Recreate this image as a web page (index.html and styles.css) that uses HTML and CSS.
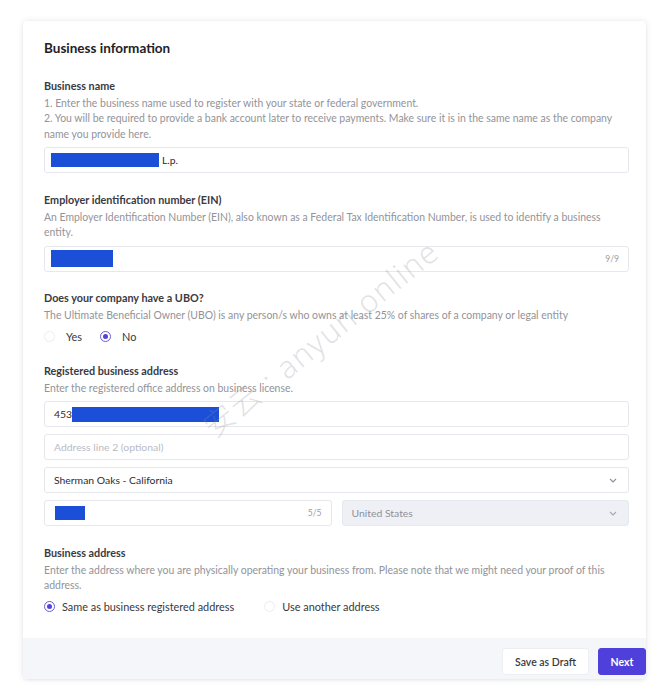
FILE: index.html
```html
<!DOCTYPE html>
<html>
<head>
<meta charset="utf-8">
<link rel="stylesheet" href="styles.css">
</head>
<body>
<div class="card">
  <div class="card-body">
    <h1 class="title">Business information</h1>

    <section class="field">
      <div class="label">Business name</div>
      <div class="help">1. Enter the business name used to register with your state or federal government.<br>2. You will be required to provide a bank account later to receive payments. Make sure it is in the same name as the company name you provide here.</div>
      <div class="inputs">
        <div class="input"><span class="redact r-name"></span><span class="val">L.p.</span></div>
      </div>
    </section>

    <section class="field">
      <div class="label">Employer identification number (EIN)</div>
      <div class="help">An Employer Identification Number (EIN), also known as a Federal Tax Identification Number, is used to identify a business entity.</div>
      <div class="inputs">
        <div class="input"><span class="redact r-ein"></span><span class="count">9/9</span></div>
      </div>
    </section>

    <section class="field">
      <div class="label">Does your company have a UBO?</div>
      <div class="help">The Ultimate Beneficial Owner (UBO) is any person/s who owns at least 25% of shares of a company or legal entity</div>
      <div class="radios">
        <label class="radio"><span class="dot"></span>Yes</label>
        <label class="radio checked"><span class="dot"></span>No</label>
      </div>
    </section>

    <section class="field">
      <div class="label">Registered business address</div>
      <div class="help">Enter the registered office address on business license.</div>
      <div class="inputs">
        <div class="input"><span class="val">453</span><span class="redact r-addr"></span></div>
        <div class="input"><span class="placeholder">Address line 2 (optional)</span></div>
        <div class="input select"><span class="val">Sherman Oaks - California</span>
          <svg class="chev" viewBox="0 0 8 5" width="8" height="5"><path d="M1 1l3 3 3-3" fill="none" stroke="#8b8f99" stroke-width="1.1"/></svg>
        </div>
        <div class="row">
          <div class="input"><span class="redact r-zip"></span><span class="count">5/5</span></div>
          <div class="input select disabled"><span class="muted">United States</span>
            <svg class="chev" viewBox="0 0 8 5" width="8" height="5"><path d="M1 1l3 3 3-3" fill="none" stroke="#a5a9b3" stroke-width="1.1"/></svg>
          </div>
        </div>
      </div>
    </section>

    <section class="field">
      <div class="label">Business address</div>
      <div class="help">Enter the address where you are physically operating your business from. Please note that we might need your proof of this address.</div>
      <div class="radios wide">
        <label class="radio checked"><span class="dot"></span>Same as business registered address</label>
        <label class="radio"><span class="dot"></span>Use another address</label>
      </div>
    </section>
  </div>
  <div class="card-footer">
    <button class="btn btn-ghost">Save as Draft</button>
    <button class="btn btn-primary">Next</button>
  </div>
  <div class="watermark">安云 : anyun.online</div>
</div>
</body>
</html>
```

FILE: styles.css
```css
* { box-sizing: border-box; }
html, body { margin: 0; padding: 0; background: #ffffff; }
body {
  font-family: Lato, "Noto Sans CJK SC", sans-serif;
  color: #2b2b2f;
  padding: 21px 20px 10px 23px;
}
.card {
  position: relative;
  width: 623px;
  background: #ffffff;
  border-radius: 4px;
  box-shadow: 0 0 6px rgba(30, 35, 60, 0.10), 0 1px 3px rgba(30, 35, 60, 0.06);
  overflow: hidden;
}
.card-body {
  padding: 18px 17px 24px 21px;
}
.title {
  margin: 0 0 20.5px;
  font-size: 13.5px;
  line-height: 18px;
  font-weight: 700;
  color: #222226;
}
.field { margin-bottom: 18.5px; }
.field:last-child { margin-bottom: 0; }
.label {
  font-size: 10.8px;
  line-height: 15px;
  font-weight: 700;
  color: #3a3a3f;
  margin-bottom: 3px;
}
.help {
  font-size: 10.45px;
  line-height: 15.5px;
  color: #939399;
  margin-bottom: 5px;
}
.inputs { display: flex; flex-direction: column; gap: 7px; }
.input {
  height: 26px;
  border: 1px solid #e6e8ed;
  border-radius: 3px;
  background: #fff;
  display: flex;
  align-items: center;
  padding: 0 9px 0 6px;
  font-size: 10.4px;
  color: #2c2c30;
}
.val { padding-left: 3px; }
.redact { display: inline-block; background: #1b4fd8; }
.r-name { width: 108px; height: 14px; }
.r-ein { width: 62px; height: 17px; }
.r-addr { width: 147px; height: 15px; margin-left: 0; }
.r-zip { width: 30px; height: 14px; margin-left: 4px; }
.placeholder { color: #b8bbc4; padding-left: 3px; }
.muted { color: #8e9099; padding-left: 3px; }
.count { margin-left: auto; font-size: 8.5px; color: #9a9ca4; }
.select .chev { margin-left: auto; margin-right: 2px; }
.row { display: grid; grid-template-columns: 1fr 1fr; gap: 10px; }
.disabled { background: #eff0f6; border-color: #e6e8f0; }
.radios { display: flex; gap: 18px; height: 15px; align-items: center; margin-top: 5.5px; }
.radios.wide { gap: 30px; }
.radio {
  display: flex;
  align-items: center;
  gap: 11px;
  font-size: 10.9px;
  color: #38383d;
}
.radios.wide .radio { gap: 7px; }
.dot {
  width: 11px; height: 11px;
  border-radius: 50%;
  border: 1px solid #ededf1;
  background: #fff;
  position: relative;
  flex: none;
}
.checked .dot { border-color: #6a5ad8; }
.checked .dot::after {
  content: "";
  position: absolute;
  left: 2px; top: 2px;
  width: 5px; height: 5px;
  border-radius: 50%;
  background: #5443d6;
}
.card-footer {
  background: #f5f6fa;
  display: flex;
  justify-content: flex-end;
  gap: 9px;
  padding: 10px 0 4px;
}
.btn {
  height: 27px;
  border-radius: 3px;
  font-family: Lato, sans-serif;
  font-size: 10.5px;
  padding: 0;
  cursor: pointer;
}
.btn-ghost {
  width: 87px;
  background: #fff;
  border: 1px solid #eceef2;
  color: #3a3a40;
  font-weight: 600;
}
.btn-primary {
  width: 48px;
  background: #4f3fdb;
  border: 1px solid #4f3fdb;
  color: #fff;
  font-weight: 700;
}
.watermark {
  position: absolute;
  left: 184px;
  top: 394px;
  font-size: 31px;
  line-height: 30px;
  letter-spacing: 1.5px;
  color: rgba(140, 140, 150, 0.26);
  transform: rotate(-39deg);
  transform-origin: left center;
  white-space: nowrap;
  pointer-events: none;
  font-family: "Noto Sans", "Noto Sans CJK SC", sans-serif;
  font-weight: 300;
}
```
